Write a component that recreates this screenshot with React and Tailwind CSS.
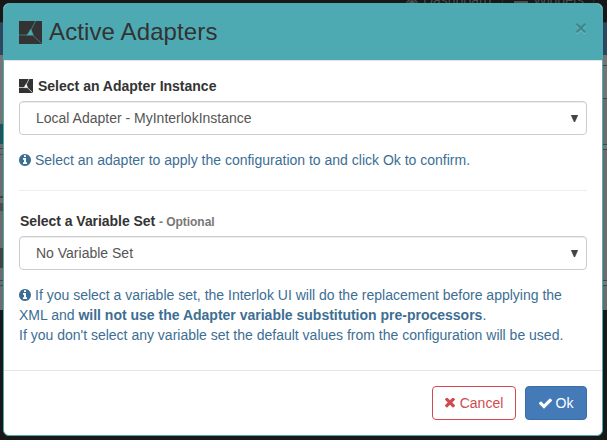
import { FaHome } from "react-icons/fa";

const InterlokMark = ({ className, line, tip, weight }) => (
  <svg viewBox="0 0 23 23" className={className}>
    <rect width="23" height="23" fill="#333" />
    <path d="M16.500 0L12 9M0 14H9M13.500 14L22.500 22.500" stroke={line} strokeWidth={weight} fill="none" />
    <path d="M11.800 8L14.500 14.300H8Z" fill={tip} stroke={tip} strokeWidth={weight / 3} />
  </svg>
);

const InfoIcon = () => (
  <svg viewBox="128 128 1536 1536" className="mr-1 inline-block h-3 w-3 align-[-1px]">
    <path fill="currentColor" d="M1152 1376v-160q0-14-9-23t-23-9h-96v-512q0-14-9-23t-23-9h-320q-14 0-23 9t-9 23v160q0 14 9 23t23 9h96v320h-96q-14 0-23 9t-9 23v160q0 14 9 23t23 9h448q14 0 23-9t9-23zm-128-896v-160q0-14-9-23t-23-9h-192q-14 0-23 9t-9 23v160q0 14 9 23t23 9h192q14 0 23-9t9-23zm640 416q0 209-103 385.500t-279.500 279.500-385.500 103-385.500-103-279.500-279.500-103-385.500 103-385.500 279.500-279.500 385.500-103 385.500 103 279.500 279.500 103 385.500z" />
  </svg>
);

const CrossIcon = () => (
  <svg viewBox="302 420 1188 1188" className="h-[10px] w-[10px]">
    <path fill="currentColor" d="M1490 1322q0 40-28 68l-136 136q-28 28-68 28t-68-28l-294-294-294 294q-28 28-68 28t-68-28l-136-136q-28-28-28-68t28-68l294-294-294-294q-28-28-28-68t28-68l136-136q28-28 68-28t68 28l294 294 294-294q28-28 68-28t68 28l136 136q28 28 28 68t-28 68l-294 294 294 294q28 28 28 68z" />
  </svg>
);

const CheckIcon = () => (
  <svg viewBox="121 160 1550 1550" className="h-[13px] w-[13px]">
    <path fill="currentColor" d="M1671 566q0 40-28 68l-724 724-136 136q-28 28-68 28t-68-28l-136-136-362-362q-28-28-28-68t28-68l136-136q28-28 68-28t68 28l294 295 656-657q28-28 68-28t68 28l136 136q28 28 28 68z" />
  </svg>
);

function Select({ value }) {
  return (
    <div className="flex h-[34px] items-center justify-between rounded border border-[#ccc] bg-white pl-4 pr-2 text-[#555] shadow-[inset_0_1px_1px_rgba(0,0,0,0.075)]">
      <span>{value}</span>
      <svg viewBox="0 0 7 7" className="h-[7px] w-[7px]">
        <path d="M0 0H7L3.900 7H3.100Z" fill="#444" stroke="#444" strokeWidth="0.3" />
      </svg>
    </div>
  );
}

function Backdrop() {
  return (
    <div className="absolute inset-0 flex flex-col bg-[#181818] text-[#4c4c4c]">
      <div className="flex h-[23px] shrink-0 items-start justify-end overflow-hidden border-b border-[#333] pr-[13px]">
        <div className="mt-[-10px] flex items-center text-[14px] leading-5">
          <FaHome className="mr-[5px] mt-1 h-3 w-3" />
          <span>Dashboard</span>
          <span className="mx-[11px] h-5 w-px bg-[#2a2a2a]" />
          <span className="mr-[5px] mt-2 h-1.5 w-3.5 bg-[#4c4c4c]" />
          <span>Widgets</span>
          <span className="ml-[9px] h-5 w-px bg-[#2a2a2a]" />
        </div>
      </div>
      <div className="h-8 shrink-0 bg-[#2c4861]" />
      <div className="flex h-[255px] shrink-0 justify-between bg-[#6c6c6c]">
        <div className="flex w-[3px] flex-col">
          <div className="h-[69px] bg-[#747474]" />
          <div className="h-5 bg-[#1f5458]" />
          <div className="h-[5px] border-b border-[#444]" />
          <div className="h-1.5 border-b border-[#505050]" />
          <div className="h-[43px] border-b-2 border-[#444]" />
          <div className="mt-[5px] h-2 bg-[#554a45]" />
          <div className="mt-[37px] h-5 bg-[#45433e]" />
          <div className="h-[13px] border-b border-[#444]" />
          <div className="h-[5px] border-b border-[#205366]" />
        </div>
        <div className="flex w-[5px] flex-col">
          <div className="h-[11px] border-b border-[#444] bg-[#747474]" />
          <div className="h-[33px] border-b border-[#444] bg-[#747474]" />
          <div className="h-[46px] border-b border-[#205366]" />
          <div className="h-[5px] border-b border-[#444] bg-[#777]" />
          <div className="h-[131px] border-b border-[#444]" />
          <div className="h-[5px] border-b border-[#205366] bg-[#777]" />
        </div>
      </div>
    </div>
  );
}

export default function App() {
  return (
    <div className="relative flex h-[440px] w-[607px] overflow-hidden pl-[3px] pt-[3px] font-['Liberation_Sans',Arial,sans-serif] text-[14px] leading-5 text-[#333]">
      <Backdrop />
      <main className="relative flex h-[433px] w-[600px] flex-col overflow-hidden rounded-md border border-[#4eaab2] bg-white">
        <header className="flex h-[57px] shrink-0 items-center border-b border-[#e5e5e5] bg-[#4eaab2] px-[15px]">
          <InterlokMark className="h-[23px] w-[23px]" line="#41797e" tip="#4eaab2" weight={1} />
          <h1 className="ml-[7px] text-[24px] leading-[26px] tracking-[0.12px]">Active Adapters</h1>
          <span className="mb-[9px] ml-auto text-[21px] font-bold leading-[21px] text-[#3e888e] [text-shadow:0_1px_0_#79c1c7]">×</span>
        </header>
        <section className="flex-1 px-[15px] pt-[15px]">
          <div className="mb-[5px] flex items-center font-bold">
            <InterlokMark className="mr-[5px] h-[14px] w-[14px]" line="#ccc" tip="#fff" weight={1.5} />
            Select an Adapter Instance
          </div>
          <Select value="Local Adapter - MyInterlokInstance" />
          <p className="mt-[15px] text-[#3c6e94]"><InfoIcon />Select an adapter to apply the configuration to and click Ok to confirm.</p>
          <hr className="my-5 border-[#eee]" />
          <div className="mb-1 pl-px font-bold"><span className="tracking-[-0.05px]">Select a Variable Set</span> <span className="text-[12px] tracking-[-0.05px] text-[#777]">- Optional</span></div>
          <Select value="No Variable Set" />
          <p className="mt-[15px] whitespace-nowrap text-[#3c6e94]">
            <InfoIcon />If you select a variable set, the Interlok UI will do the replacement before applying the<br />
            XML and <b>will not use the Adapter variable substitution pre-processors</b>.<br />
            If you don't select any variable set the default values from the configuration will be used.
          </p>
        </section>
        <footer className="flex h-[65px] shrink-0 justify-end gap-[9px] border-t border-[#e5e5e5] px-[15px] pt-[15px]">
          <button className="flex h-[34px] w-[84px] items-center justify-center gap-[5px] rounded border border-[#d04b50] text-[#d04b50]"><CrossIcon />Cancel</button>
          <button className="flex h-[34px] w-[62px] items-center justify-center gap-1 rounded border border-[#3b6ea5] bg-[#447ab7] text-white"><CheckIcon />Ok</button>
        </footer>
      </main>
    </div>
  );
}
